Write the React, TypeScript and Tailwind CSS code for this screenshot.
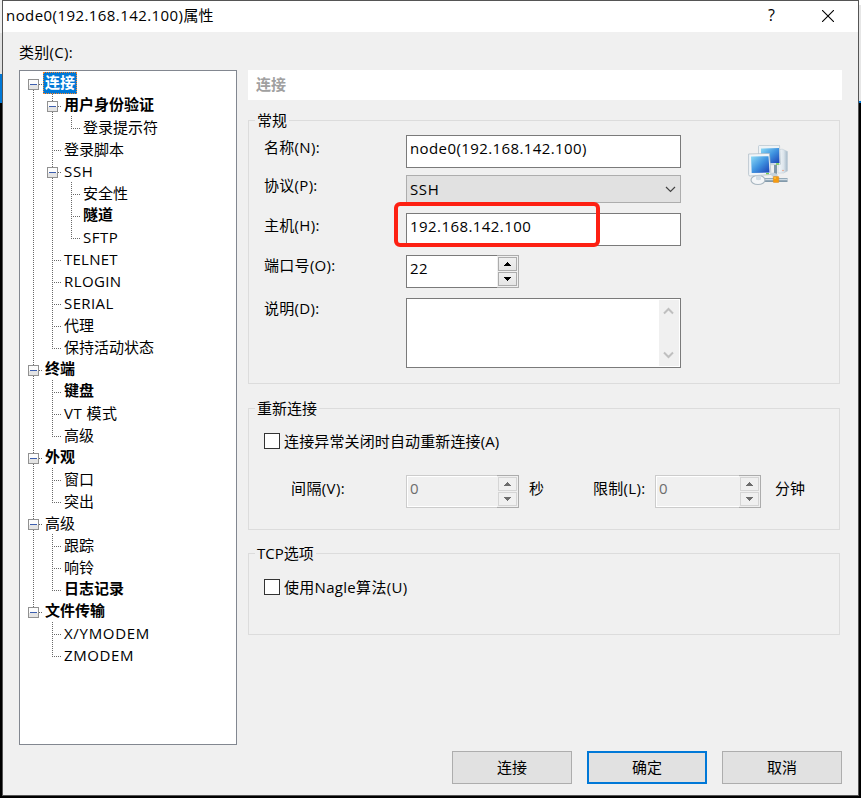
import React from "react";

type Cell = "line" | "tee" | "end" | "first" | "box" | "last" | "blank";

type Row = {
  cells: Cell[];
  text: string;
  bold?: boolean;
  selected?: boolean;
  track?: string;
};

const rows: Row[] = [
  { cells: ["first"], text: "连接", bold: true, selected: true },
  { cells: ["line", "box"], text: "用户身份验证", bold: true },
  { cells: ["line", "line", "end"], text: "登录提示符" },
  { cells: ["line", "tee"], text: "登录脚本" },
  { cells: ["line", "box"], text: "SSH", track: "tracking-[0.7px]" },
  { cells: ["line", "line", "tee"], text: "安全性" },
  { cells: ["line", "line", "tee"], text: "隧道", bold: true },
  { cells: ["line", "line", "end"], text: "SFTP", track: "tracking-[0.5px]" },
  { cells: ["line", "tee"], text: "TELNET", track: "tracking-[0.25px]" },
  { cells: ["line", "tee"], text: "RLOGIN", track: "tracking-[0.4px]" },
  { cells: ["line", "tee"], text: "SERIAL", track: "tracking-[0.4px]" },
  { cells: ["line", "tee"], text: "代理" },
  { cells: ["line", "end"], text: "保持活动状态" },
  { cells: ["box"], text: "终端", bold: true },
  { cells: ["line", "tee"], text: "键盘", bold: true },
  { cells: ["line", "tee"], text: "VT 模式", track: "tracking-[0.5px]" },
  { cells: ["line", "end"], text: "高级" },
  { cells: ["box"], text: "外观", bold: true },
  { cells: ["line", "tee"], text: "窗口" },
  { cells: ["line", "end"], text: "突出" },
  { cells: ["box"], text: "高级" },
  { cells: ["line", "tee"], text: "跟踪" },
  { cells: ["line", "tee"], text: "响铃" },
  { cells: ["line", "end"], text: "日志记录", bold: true },
  { cells: ["last"], text: "文件传输", bold: true },
  { cells: ["blank", "tee"], text: "X/YMODEM", track: "tracking-[0.7px]" },
  { cells: ["blank", "end"], text: "ZMODEM", track: "tracking-[0.6px]" },
];

function TreeCell({ kind }: { kind: Cell }) {
  const boxed = kind === "first" || kind === "box" || kind === "last";
  const top = kind === "first" ? 12 : 0;
  const bottom = kind === "end" || kind === "last" ? 12 : 22;
  return (
    <svg width="19" height="22" viewBox="0 0 19 22" className="shrink-0" shapeRendering="crispEdges">
      {kind !== "blank" && (
        <path d={`M9.5 ${top}V${bottom}`} stroke="#696969" strokeDasharray="1 1" fill="none" />
      )}
      {kind !== "blank" && kind !== "line" && (
        <path d="M9 12.5H18" stroke="#696969" strokeDasharray="1 1" fill="none" />
      )}
      {boxed && (
        <>
          <rect x="4" y="7" width="11" height="11" fill="#919191" />
          <rect x="5" y="8" width="9" height="9" fill="#fcfcfc" />
          <rect x="5" y="13" width="9" height="4" fill="#e4e4e4" />
          <rect x="6" y="12" width="7" height="1" fill="#3c5eae" />
        </>
      )}
    </svg>
  );
}

function TreeRow({ row }: { row: Row }) {
  return (
    <div className="flex h-[22px]">
      {row.cells.map((c, i) => (
        <TreeCell key={i} kind={c} />
      ))}
      <span
        className={
          "h-[22px] whitespace-pre " +
          (row.selected
            ? "border border-dotted border-[#ff8728] bg-[#0078d7] px-px leading-[18px] text-white "
            : row.bold
              ? "pl-[2px] leading-[20px] "
              : "pl-[2px] leading-[22px] ") +
          (row.bold ? "font-bold " : "") +
          (row.track ?? "")
        }
      >
        {row.text}
      </span>
    </div>
  );
}

function Group({ title, className, children }: { title: string; className: string; children: React.ReactNode }) {
  return (
    <fieldset className={"w-[592px] border border-[#dcdcdc] " + className}>
      <legend className="ml-[6px] h-[21px] px-[2px] leading-[21px]">{title}</legend>
      {children}
    </fieldset>
  );
}

function Spinner({ value, className, disabled }: { value: string; className: string; disabled?: boolean }) {
  const btn =
    "flex h-[14px] w-[19px] items-center justify-center border " +
    (disabled ? "border-[#d5d5d5] bg-[#f0f0f0]" : "border-[#acacac] bg-linear-to-b from-[#f0f0f0] to-[#e5e5e5]");
  const fill = disabled ? "#6d6d6d" : "#000";
  return (
    <div className={"flex h-[33px] shrink-0 " + className}>
      <div
        className={
          "flex-1 border border-r-0 pl-[3px] leading-[24px] tracking-[0.4px] " +
          (disabled
            ? "border-[#cccccc] bg-[#f0f0f0] text-[#6d6d6d] shadow-[inset_1px_1px_0_#fff,inset_0_-1px_0_#fff]"
            : "border-[#7a7a7a] bg-white")
        }
      >
        {value}
      </div>
      <div className="flex w-[22px] flex-col gap-px border border-l-0 border-[#acacac] bg-[#f0f0f0] pt-px pl-px">
        <div className={btn}>
          <svg width="7" height="4" shapeRendering="crispEdges">
            <path d="M3 0h1v1h1v1h1v1h1v1H0V3h1V2h1V1h1z" fill={fill} />
          </svg>
        </div>
        <div className={btn}>
          <svg width="7" height="4" shapeRendering="crispEdges">
            <path d="M0 0h7v1H6v1H5v1H4v1H3V3H2V2H1V1H0z" fill={fill} />
          </svg>
        </div>
      </div>
    </div>
  );
}

function Checkbox({ className, children }: { className: string; children: React.ReactNode }) {
  return (
    <div className="flex items-center">
      <span className="mr-[4px] h-[16px] w-[16px] border border-[#333] bg-white" />
      <span className={"leading-[16px] " + className}>{children}</span>
    </div>
  );
}

function NetworkIcon() {
  return (
    <svg width="40" height="41" viewBox="0 0 40 41">
      <defs>
        <linearGradient id="screen" x1="0" y1="0" x2="1" y2="1">
          <stop offset="0" stopColor="#8fdcf6" />
          <stop offset="0.5" stopColor="#3f93e0" />
          <stop offset="1" stopColor="#1b40b4" />
        </linearGradient>
        <linearGradient id="tower" x1="0" y1="0" x2="1" y2="0">
          <stop offset="0" stopColor="#f6f9fb" />
          <stop offset="0.6" stopColor="#dbe4eb" />
          <stop offset="1" stopColor="#a3b7c7" />
        </linearGradient>
      </defs>
      <path d="M31 5l3-1 5.500 2.500V26l-4 2H30z" fill="url(#tower)" stroke="#bccad5" strokeWidth="0.5" />
      <circle cx="35" cy="25.500" r="0.7" fill="#f08a62" />
      <path d="M10.500 1.500q0-1 1-1l20-.2 1 19-22 1z" fill="#eef3f6" stroke="#b3c2cc" strokeWidth="0.7" />
      <path d="M13 3.500l18-.5.500 15-18.500.5z" fill="url(#screen)" />
      <path d="M26 20h3v11h-3z" fill="#8097a8" />
      <path d="M16 35h23.500" stroke="#8299aa" strokeWidth="4" />
      <path d="M16 34.500h23.500" stroke="#cfdce5" strokeWidth="1.500" />
      <ellipse cx="10" cy="35" rx="7" ry="4.500" fill="#f4f6f8" stroke="#a9b7c1" strokeWidth="1.200" />
      <path d="M8 29h5v5.500q-2.500 1.500-5 0z" fill="#d3dde5" />
      <path d="M.6 9l20.800-.6L23 29.500l-21 1.500q-1.400 0-1.400-1.500z" fill="#f1f5f8" stroke="#aab8c3" strokeWidth="0.7" />
      <path d="M3 11.500l17.500-.3 1 16.300-17.800.5z" fill="url(#screen)" />
      <path d="M18 28.700h3M28 19h3" stroke="#73cf48" strokeWidth="1.300" />
      <path d="M22 29l3-1.500 4.500 1.500v3h-4.500z" fill="#c4d1db" />
      <rect x="25.300" y="31.500" width="5.500" height="6" rx="0.600" fill="#f59b10" stroke="#dd8a20" strokeWidth="0.500" />
      <path d="M26 33h2" stroke="#ffd84b" />
    </svg>
  );
}

function Label({ className, children }: { className: string; children: React.ReactNode }) {
  return (
    <span className={"w-[142px] shrink-0 self-start leading-[20px] tracking-[0.3px] " + className}>{children}</span>
  );
}

export default function App() {
  return (
    <div className="flex h-[798px] w-[861px] flex-col overflow-hidden bg-black font-['Open_Sans','Noto_Sans_CJK_SC',sans-serif] text-[15px] text-black">
      <div className="flex h-[796px]">
        <div className="flex w-[2px] shrink-0 flex-col">
          <div className="h-[33px] bg-[#f0f0f0]" />
          <div className="h-[41px] bg-[#e1e1e1]" />
          <div className="h-[29px] bg-[#0078d7]" />
        </div>

        <div className="flex w-[857px] shrink-0 flex-col border border-[#555] bg-[#f0f0f0]">
          <header className="flex h-[31px] shrink-0 items-center bg-white pl-[3px]">
            <span className="h-[31px] leading-[29px]">
              <span className="tracking-[0.43px]">node0(192.168.142.100)</span>属性
            </span>
            <span className="mr-[47px] ml-auto h-[31px] text-[16px] leading-[29px]">?</span>
            <svg width="12" height="12" viewBox="0 0 12 12" className="mr-[24px] mb-[2px]">
              <path d="M0 0L12 12M12 0L0 12" stroke="#000" strokeWidth="1.100" />
            </svg>
          </header>

          <div className="h-[38px] pt-[10px] pl-[16px] leading-[20px] tracking-[0.3px]">类别(C):</div>

          <div className="flex pl-[16px]">
            <nav className="mr-[11px] h-[675px] w-[218px] shrink-0 border border-[#828790] bg-white pt-px pl-[4px]">
              {rows.map((r, i) => (
                <TreeRow key={i} row={r} />
              ))}
            </nav>

            <main className="flex w-[594px] flex-col">
              <h1 className="h-[30px] bg-white pl-[8px] leading-[28px] font-bold text-[#a0a0a0]">连接</h1>

              <Group title="常规" className="mt-[10px] h-[274px]">
                <div className="flex pt-[4px] pl-[15px]">
                  <div className="flex w-[417px] flex-col">
                    <div className="flex">
                      <Label className="mt-[2px]">名称(N):</Label>
                      <div className="h-[33px] flex-1 border border-[#7a7a7a] bg-white pl-[3px] leading-[24px] tracking-[0.4px]">
                        node0(192.168.142.100)
                      </div>
                    </div>
                    <div className="mt-[7px] flex">
                      <Label className="mt-0">协议(P):</Label>
                      <div className="flex h-[28px] flex-1 items-center justify-between border border-[#adadad] bg-[#e1e1e1] pr-[4px] pl-[3px] tracking-[0.6px]">
                        SSH
                        <svg width="11" height="7" viewBox="0 0 11 7">
                          <path d="M1 1l4.500 4.500L10 1" fill="none" stroke="#444" strokeWidth="1.200" />
                        </svg>
                      </div>
                    </div>
                    <div className="mt-[10px] flex">
                      <Label className="mt-[2px]">主机(H):</Label>
                      <div className="relative h-[33px] flex-1 border border-[#7a7a7a] bg-white pl-[3px] leading-[24px] tracking-[0.43px]">
                        192.168.142.100
                        <div className="absolute -top-[12px] -left-[13px] h-[45px] w-[206px] rounded-[6px] border-4 border-[#fd2012]" />
                      </div>
                    </div>
                    <div className="mt-[9px] flex">
                      <Label className="mt-0">端口号(O):</Label>
                      <Spinner value="22" className="w-[113px]" />
                    </div>
                    <div className="mt-[10px] flex">
                      <Label className="mt-0">说明(D):</Label>
                      <div className="flex h-[70px] flex-1 justify-end border border-[#7a7a7a] bg-white p-px">
                        <div className="flex w-[20px] flex-col items-center justify-between bg-[#f0f0f0] py-[7px] pr-px">
                          <svg width="11" height="8" viewBox="0 0 11 8">
                            <path d="M1 6.500L5.500 2L10 6.500" fill="none" stroke="#bfbfbf" strokeWidth="2" />
                          </svg>
                          <svg width="11" height="8" viewBox="0 0 11 8">
                            <path d="M1 1.500L5.500 6L10 1.500" fill="none" stroke="#bfbfbf" strokeWidth="2" />
                          </svg>
                        </div>
                      </div>
                    </div>
                  </div>
                  <div className="mt-[10px] ml-[67px]">
                    <NetworkIcon />
                  </div>
                </div>
              </Group>

              <Group title="重新连接" className="mt-[14px] h-[132px]">
                <div className="pt-[14px] pl-[15px]">
                  <Checkbox className="tracking-[0.13px]">连接异常关闭时自动重新连接(A)</Checkbox>
                  <div className="mt-[26px] flex pl-[27px] leading-[27px]">
                    <span className="w-[115px] tracking-[0.4px]">间隔(V):</span>
                    <Spinner value="0" className="w-[113px]" disabled />
                    <span className="w-[74px] pl-[10px]">秒</span>
                    <span className="w-[62px] tracking-[0.3px]">限制(L):</span>
                    <Spinner value="0" className="w-[106px]" disabled />
                    <span className="pl-[14px]">分钟</span>
                  </div>
                </div>
              </Group>

              <Group title="TCP选项" className="mt-[13px] h-[92px]">
                <div className="pt-[15px] pl-[15px]">
                  <Checkbox className="tracking-[0.3px]">使用Nagle算法(U)</Checkbox>
                </div>
              </Group>
            </main>
          </div>

          <footer className="mt-[6px] flex justify-end gap-[15px] pr-[16px]">
            <button className="h-[33px] w-[120px] border border-[#adadad] bg-[#e1e1e1]">连接</button>
            <button className="h-[33px] w-[120px] border-2 border-[#0078d7] bg-[#e1e1e1]">确定</button>
            <button className="h-[33px] w-[120px] border border-[#adadad] bg-[#e1e1e1]">取消</button>
          </footer>
        </div>

        <div className="flex w-[2px] shrink-0 flex-col">
          <div className="h-[5px] bg-white" />
          <div className="h-[96px] bg-[#e6e6e6]" />
          <div className="h-[2px] bg-[#0078d7]" />
        </div>
      </div>
    </div>
  );
}
